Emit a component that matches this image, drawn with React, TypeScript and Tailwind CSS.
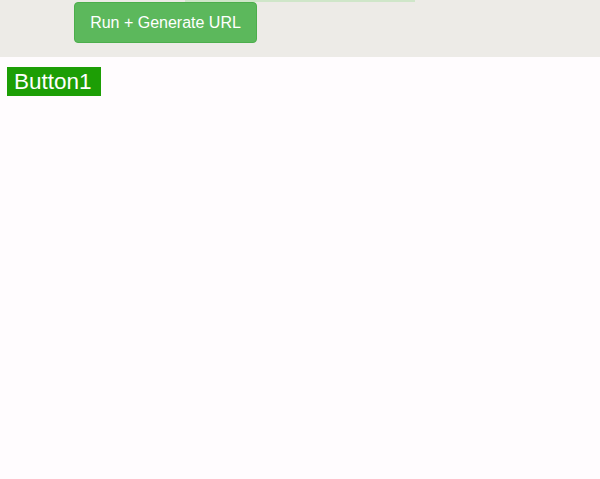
export default function App() {
  return (
    <div className="min-h-[479px] bg-[#fffcfe] font-['Liberation_Sans',Arial,sans-serif]">
      {/* Toolbar */}
      <div className="h-[57px] bg-[#edebe7] pl-[74px] pt-[2px] relative">
        <div className="absolute top-0 left-[185px] w-[230px] h-[2px] bg-[#cfe6c9]" />
        <button className="h-[41px] w-[183px] rounded-[4px] border border-[#4cae4c] bg-[#5cb85c] text-white text-[16px]">
          Run + Generate URL
        </button>
      </div>

      {/* Output */}
      <div className="pl-[7px] pt-[10px]">
        <button className="h-[29px] w-[94px] pl-[7px] text-left bg-[#1d9e05] text-white text-[22.5px] leading-[29px]">
          Button1
        </button>
      </div>
    </div>
  );
}
